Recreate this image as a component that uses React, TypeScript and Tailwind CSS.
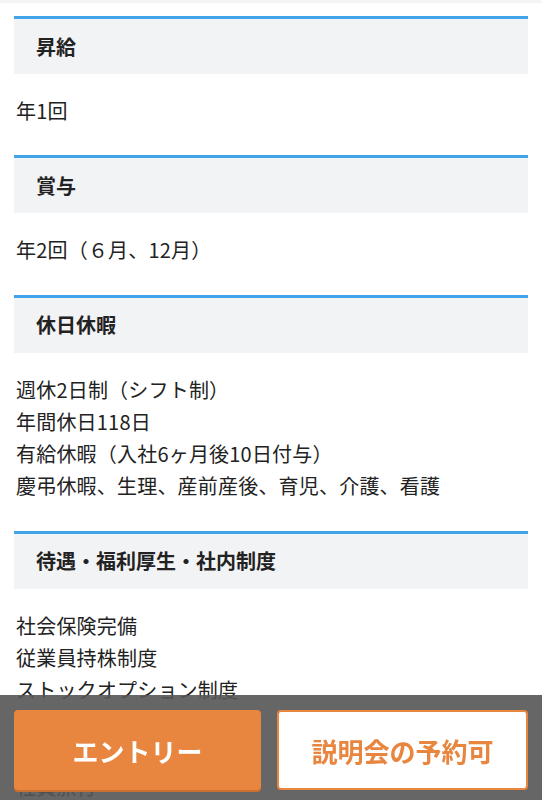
const sections = [
  { title: "昇給", lines: ["年1回"] },
  { title: "賞与", lines: ["年2回（６月、12月）"] },
  {
    title: "休日休暇",
    lines: [
      "週休2日制（シフト制）",
      "年間休日118日",
      "有給休暇（入社6ヶ月後10日付与）",
      "慶弔休暇、生理、産前産後、育児、介護、看護",
    ],
  },
  {
    title: "待遇・福利厚生・社内制度",
    lines: [
      "社会保険完備",
      "従業員持株制度",
      "ストックオプション制度",
      "資格取得支援制度",
      "書籍購入補助",
      "社員旅行",
    ],
  },
];

const font = {
  fontFamily: '"Noto Sans CJK JP", "Noto Sans", sans-serif',
};

export default function App() {
  return (
    <div className="min-h-[800px] bg-white text-[#222]" style={font}>
      <div className="h-[3px] bg-[#f5f5f5]" />

      <main className="pb-[120px]">
        {sections.map((s) => (
          <section key={s.title}>
            <h2 className="mx-[14px] mt-[13px] flex h-[58px] items-center border-t-[3px] border-[#41a3e8] bg-[#f2f3f5] pl-[22px] text-[20px] font-bold leading-none">
              {s.title}
            </h2>
            <div className="px-[16px] pt-[21px] pb-[15px] text-[20px] leading-[32.3px] tracking-[0.2px]">
              {s.lines.map((l) => (
                <p key={l}>{l}</p>
              ))}
            </div>
          </section>
        ))}
      </main>

      <div className="fixed inset-x-0 bottom-0 flex h-[105px] gap-[16px] bg-[#555]/90 px-[14px] pt-[15px] pb-[10px]">
        <button className="flex h-[80px] flex-1 items-center justify-center rounded-[4px] bg-[#e8853f] text-[26px] font-bold text-white shadow-[0_2px_0_#c96f30]">
          エントリー
        </button>
        <button className="flex h-[80px] flex-1 items-center justify-center rounded-[4px] border-2 border-[#e8853f] bg-white text-[26px] font-bold text-[#e8853f]">
          説明会の予約可
        </button>
      </div>
    </div>
  );
}
